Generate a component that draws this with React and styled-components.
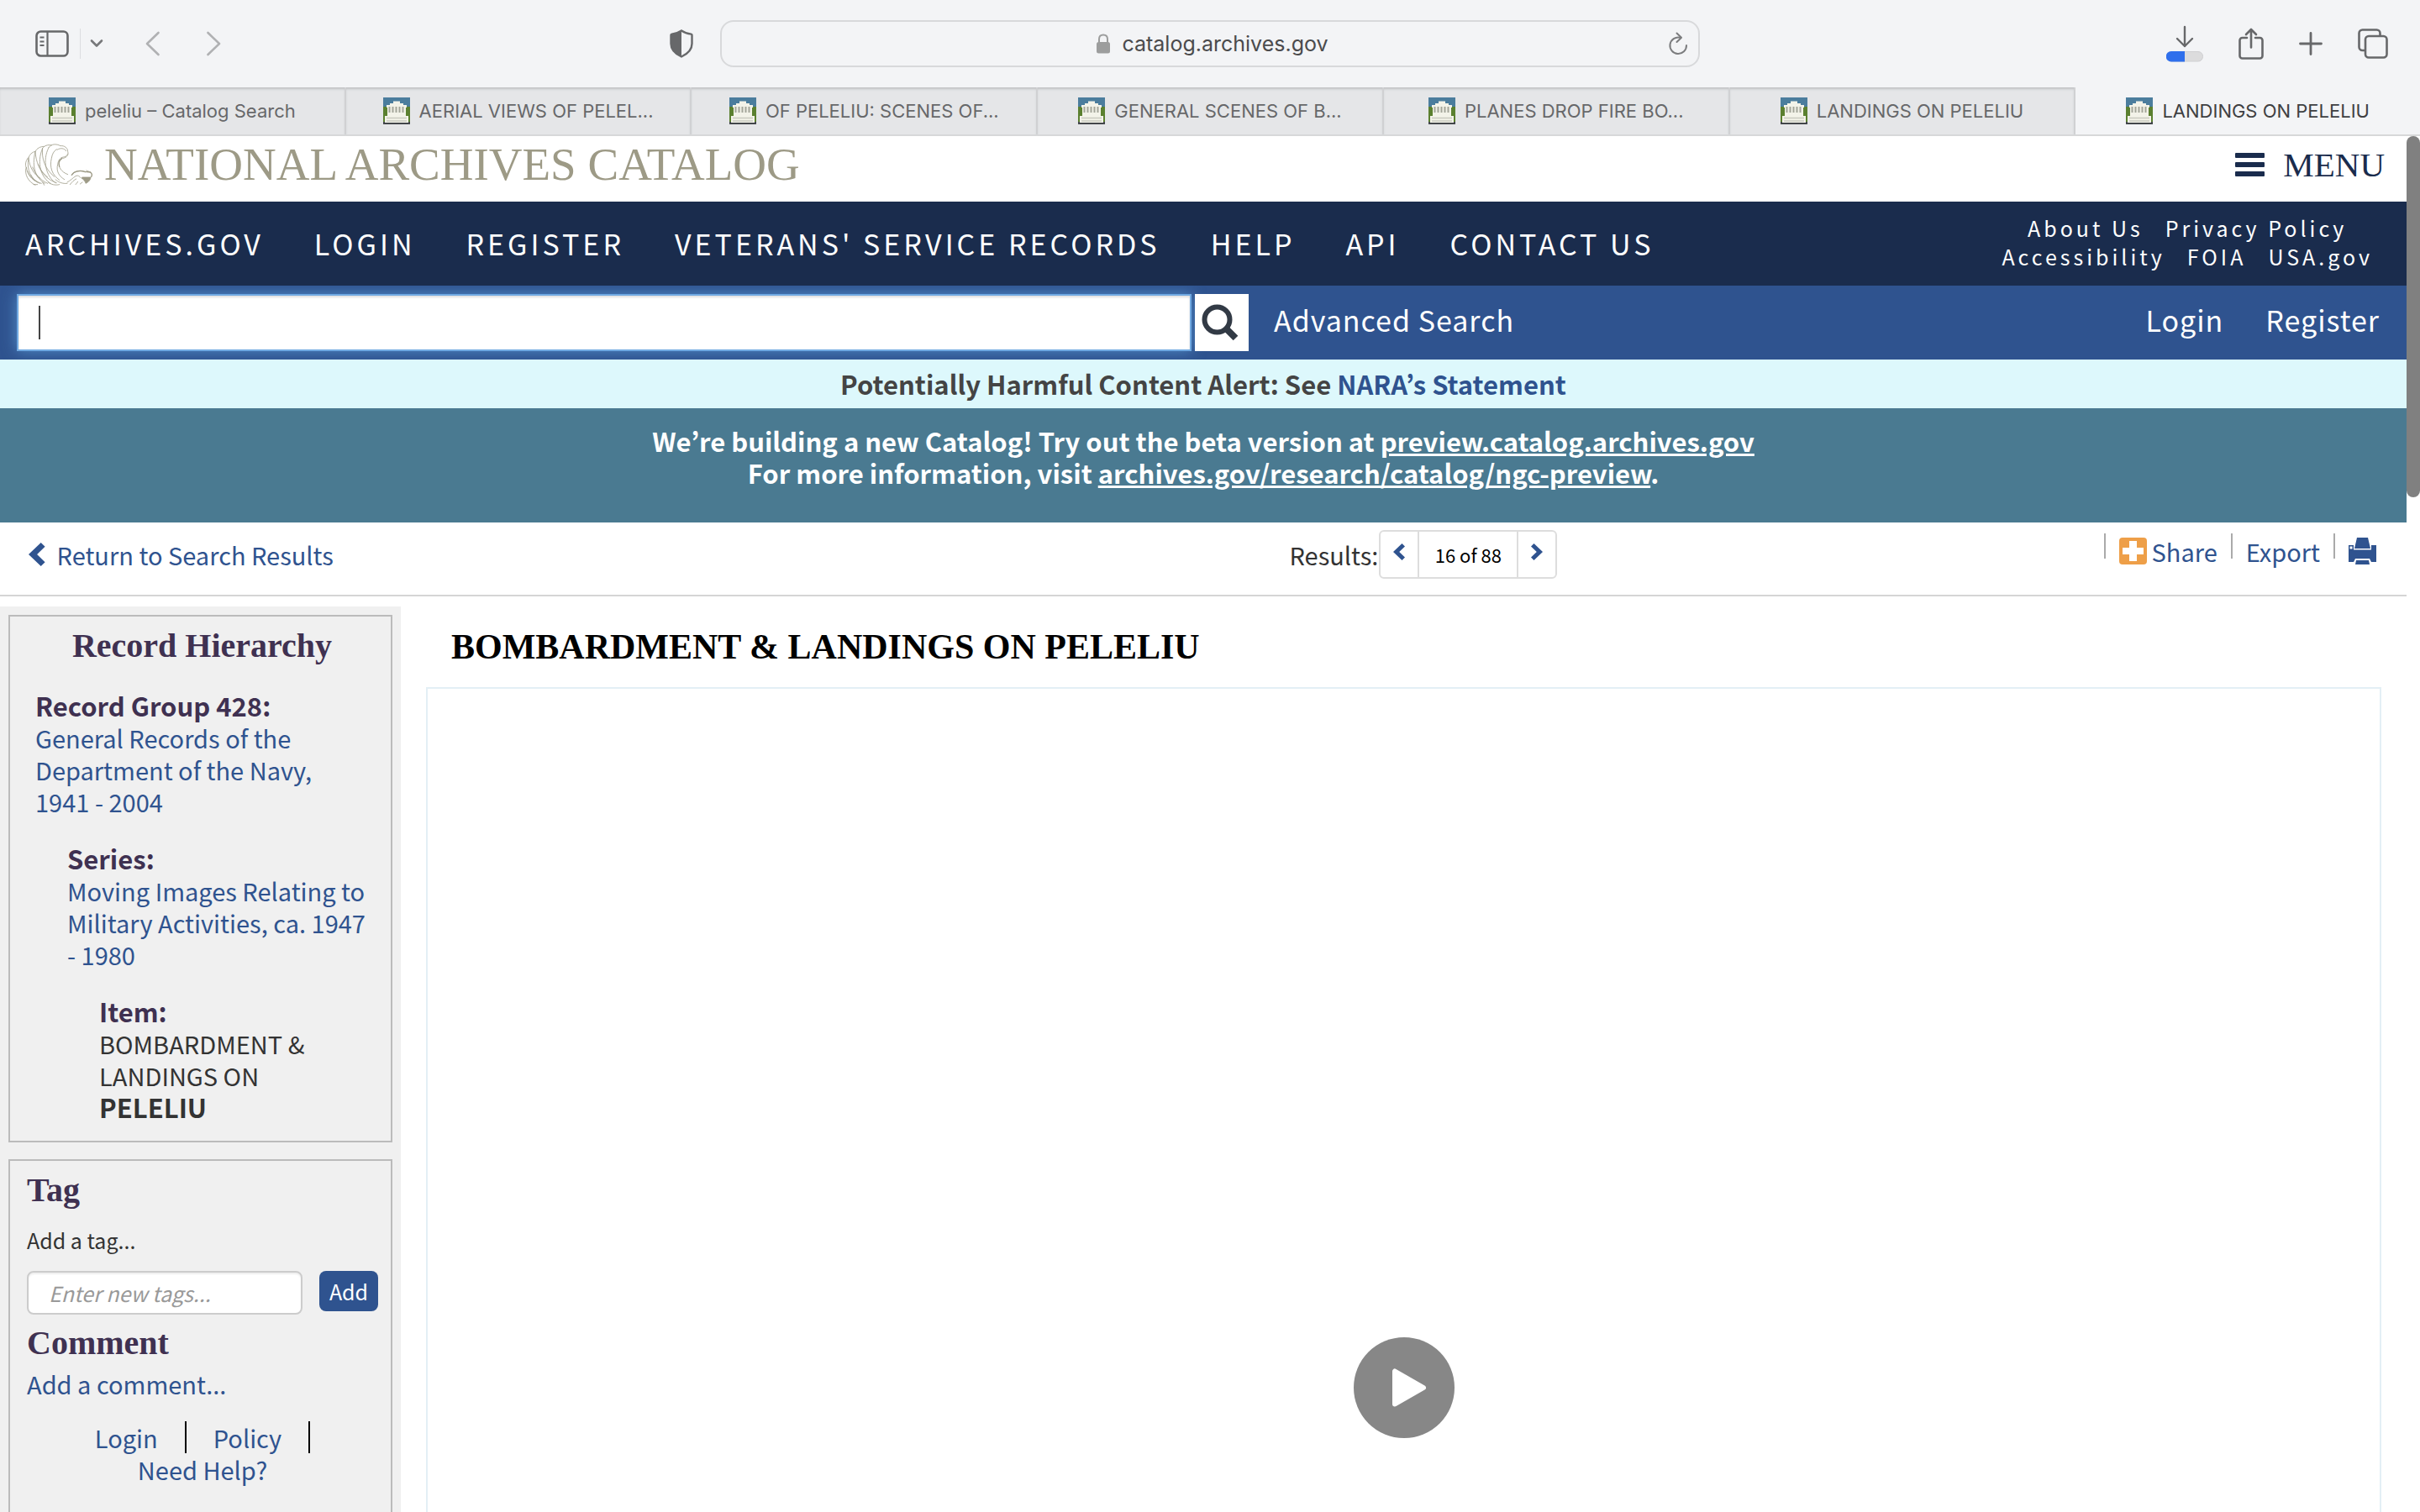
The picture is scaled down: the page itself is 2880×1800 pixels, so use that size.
import React from 'react';
import styled, { createGlobalStyle } from 'styled-components';

const tabs = [
  { title: 'peleliu – Catalog Search' },
  { title: 'AERIAL VIEWS OF PELEL...' },
  { title: 'OF PELELIU: SCENES OF...' },
  { title: 'GENERAL SCENES OF B...' },
  { title: 'PLANES DROP FIRE BO...' },
  { title: 'LANDINGS ON PELELIU' },
  { title: 'LANDINGS ON PELELIU', active: true },
];

const navLinks = [
  'ARCHIVES.GOV',
  'LOGIN',
  'REGISTER',
  "VETERANS' SERVICE RECORDS",
  'HELP',
  'API',
  'CONTACT US',
];

const siteLinks = [
  ['About Us', 'Privacy Policy'],
  ['Accessibility', 'FOIA', 'USA.gov'],
];

const SidebarIcon = () => (
  <svg width="40" height="32" viewBox="0 0 40 32" fill="none" stroke="#67686a">
    <rect x="1.5" y="1.5" width="37" height="29" rx="5" strokeWidth="2.6" />
    <path d="M14.5 2v28" strokeWidth="2.2" />
    <path d="M5.5 8.5h5M5.5 13.5h5M5.5 18h5" strokeWidth="2" />
  </svg>
);

const ChevronDown = () => (
  <svg width="16" height="12" viewBox="0 0 16 12" fill="none" stroke="#77787a" strokeWidth="2.6" strokeLinecap="round" strokeLinejoin="round">
    <path d="M2 2.5l6 6 6-6" />
  </svg>
);

const BackIcon = () => (
  <svg width="18" height="30" viewBox="0 0 18 30" fill="none" stroke="#b0b1b3" strokeWidth="2.6" strokeLinecap="round" strokeLinejoin="round">
    <path d="M15.500 2L2 15l13.500 13" />
  </svg>
);

const ForwardIcon = () => (
  <svg width="18" height="30" viewBox="0 0 18 30" fill="none" stroke="#b0b1b3" strokeWidth="2.6" strokeLinecap="round" strokeLinejoin="round">
    <path d="M2.500 2L16 15 2.500 28" />
  </svg>
);

const ShieldIcon = () => (
  <svg width="28" height="34" viewBox="0 0 28 34">
    <path d="M14 1.500C10.500 4 6 5.200 2.500 5.600 1.800 5.700 1.500 6 1.500 6.800V17c0 7.500 6 12.500 12.500 15.500C20.500 29.500 26.500 24.500 26.500 17V6.800c0-.8-.3-1.100-1-1.200C22 5.200 17.500 4 14 1.500z" fill="none" stroke="#67686a" strokeWidth="2.4" />
    <path d="M14 1.500C10.500 4 6 5.200 1.500 5.800V17c0 7.500 6 12.500 12.500 15.500z" fill="#67686a" />
  </svg>
);

const LockIcon = () => (
  <svg width="16" height="24" viewBox="0 0 16 24">
    <rect x="0" y="10" width="16" height="13.500" rx="2.500" fill="#9c9d9d" />
    <path d="M3 11V6.500C3 3.500 5 1.500 8 1.500s5 2 5 5V11" fill="none" stroke="#9c9d9d" strokeWidth="2" />
  </svg>
);

const ReloadIcon = () => (
  <svg width="24" height="28" viewBox="0 0 24 28" fill="none" stroke="#7b7c7e" strokeWidth="2" strokeLinecap="round" strokeLinejoin="round">
    <path d="M14.500 6.700A9.800 9.800 0 1 0 22 16" />
    <path d="M10.500 1.500l5.500 5.200-5.500 5.300" />
  </svg>
);

const DownloadIcon = () => (
  <svg width="44" height="44" viewBox="0 0 44 44" fill="none">
    <path d="M22 2v23M13 16l9 9 9-9" stroke="#67686a" strokeWidth="2.400" strokeLinecap="round" strokeLinejoin="round" />
    <rect x="0.500" y="31.500" width="43" height="11.500" rx="5.500" fill="#dcdcdd" stroke="#cfcfd1" />
    <path d="M22 31v12.500H6a6 6 0 0 1 0-12.500z" fill="#2f6fec" />
  </svg>
);

const ShareIcon = () => (
  <svg width="30" height="38" viewBox="0 0 30 38" fill="none" stroke="#67686a" strokeWidth="2.600" strokeLinecap="round" strokeLinejoin="round">
    <path d="M10 12H4.500a3 3 0 0 0-3 3v18.500a3 3 0 0 0 3 3h21a3 3 0 0 0 3-3V15a3 3 0 0 0-3-3H20" />
    <path d="M15 23.500V2M9 8l6-6 6 6" />
  </svg>
);

const PlusIcon = () => (
  <svg width="28" height="28" viewBox="0 0 28 28" stroke="#67686a" strokeWidth="2.800" strokeLinecap="round">
    <path d="M14 1.500v25M1.500 14h25" />
  </svg>
);

const TabsIcon = () => (
  <svg width="36" height="36" viewBox="0 0 36 36" fill="none" stroke="#67686a" strokeWidth="2.600">
    <path d="M9 26H5.500a4 4 0 0 1-4-4V5.500a4 4 0 0 1 4-4h17a4 4 0 0 1 4 4V9" />
    <rect x="9" y="9" width="25.500" height="25.500" rx="4" />
  </svg>
);

const Favicon = () => (
  <svg width="32" height="32" viewBox="0 0 32 32">
    <rect width="32" height="32" fill="#4b7d9d" />
    <rect y="11" width="32" height="21" fill="#5b8030" />
    <rect y="29" width="32" height="3" fill="#42464a" />
    <path d="M4 9h4V7h4V4.500h8V7h4v2h4v3H4z" fill="#f3f3e9" />
    <rect x="5" y="10" width="22" height="13" fill="#f3f3e9" />
    <path d="M7.500 11v7M11.500 11v7M15.500 11v7M19.500 11v7M23.500 11v7" stroke="#a4a69a" strokeWidth="2" />
    <rect x="2" y="22" width="28" height="8" fill="#f3f3e9" />
    <path d="M4 24.500h24M4 28h24" stroke="#c9cac0" strokeWidth="1.400" />
  </svg>
);

const EagleLogo = () => (
  <svg width="80" height="50" viewBox="0 0 240 150" fill="none" stroke="#9d9a86" strokeWidth="2.400" strokeLinecap="round">
    <path d="M36 148C10 136-4 108 4 84c3 22 14 38 30 48" />
    <path d="M3 84c-4-10-1-24 8-34" />
    <path d="M52 142C20 128 4 92 12 52c4 32 18 58 42 72" />
    <path d="M12 52c2-12 12-22 24-24" />
    <path d="M70 142C38 124 22 84 36 28c2 38 16 70 44 92" />
    <path d="M36 28c6-12 18-18 32-18" />
    <path d="M90 142C56 120 40 70 62 16c-4 38 8 74 42 102" />
    <path d="M62 16c6-8 18-14 32-10" />
    <path d="M108 140C74 116 60 60 84 14" />
    <path d="M84 14C92 0 112 0 126 8c14-2 26 8 26 20 4 12-4 22-16 24" />
    <path d="M122 130c-26-18-36-46-28-78 2-14 8-26 18-32" />
    <path d="M114 22c12-8 26-6 32 4" />
    <path d="M140 128c-20-12-30-30-24-54 2-14 8-24 20-26 6 0 12-4 16-10" />
    <path d="M132 52c-10 6-14 18-10 30" strokeWidth="4" />
    <path d="M122 82c4 12 14 22 30 28" />
    <path d="M20 112c8 16 22 26 38 30M8 98c8 20 20 32 36 40" />
    <path d="M26 84c10 26 28 46 54 58M46 74c12 32 34 56 66 66" />
    <path d="M30 146h14M62 138l6 10M82 138c10 8 26 12 40 8M108 128c10 10 26 16 42 14" />
    <path d="M166 112c8-14 28-18 48-12l18 2c6 4 8 10 4 16" strokeWidth="4" />
    <path d="M170 106c12-10 34-10 44-4M150 138c12-6 20-16 30-22 8-4 14 0 18 6M160 146c8-10 14-16 22-20M180 146l8-10M196 144l8-6M218 96l16 6" />
    <path d="M204 120h30c0 8-8 18-18 22-2-8-8-14-14-18z" fill="#9d9a86" />
  </svg>
);

const SearchIcon = () => (
  <svg width="44" height="44" viewBox="0 0 44 44" fill="none" stroke="#323a45">
    <circle cx="18.500" cy="18.500" r="15" strokeWidth="6" />
    <path d="M29 29l11.500 11.500" strokeWidth="8" />
  </svg>
);

const AngleIcon = ({ flip, size = 20 }) => (
  <svg width={size * 0.7} height={size} viewBox="0 0 14 20" fill="#2f538f">
    <path d={flip ? 'M3.500 0L14 10 3.500 20 0 16.600 6.800 10 0 3.400z' : 'M10.500 0L0 10l10.500 10 3.500-3.400L7.200 10 14 3.400z'} />
  </svg>
);

const AddThisIcon = () => (
  <svg width="33" height="32" viewBox="0 0 33 32">
    <rect width="33" height="32" rx="4" fill="#ee9f48" />
    <path d="M12 4h9v8h8v8h-8v8h-9v-8H4v-8h8z" fill="#fff" />
  </svg>
);

const PrinterIcon = () => (
  <svg width="33" height="32" viewBox="0 0 33 32" fill="#2f538f">
    <path d="M10 0h13l3 13H7z" />
    <path d="M0 9h6v5.500h21V9h6v20h-6l-2-4H8l-2 4H0z" />
    <path d="M9 27h15l1 5H8z" />
    <rect x="1.500" y="10.500" width="3" height="3" fill="#fff" />
  </svg>
);

const PlayIcon = () => (
  <svg width="120" height="120" viewBox="0 0 120 120">
    <circle cx="60" cy="60" r="60" fill="#878787" />
    <path d="M49 40.500v39L83 60z" fill="#fff" stroke="#fff" strokeWidth="6" strokeLinejoin="round" />
  </svg>
);

const App = () => {
  return (
    <Window>
      <GlobalStyle />
      <Toolbar>
        <ToolbarLeft>
          <SidebarToggle>
            <IconButton aria-label="Show sidebar">
              <SidebarIcon />
            </IconButton>
            <IconButton aria-label="Tab groups" $divided>
              <ChevronDown />
            </IconButton>
          </SidebarToggle>
          <HistoryButtons>
            <IconButton aria-label="Back">
              <BackIcon />
            </IconButton>
            <IconButton aria-label="Forward">
              <ForwardIcon />
            </IconButton>
          </HistoryButtons>
          <ShieldButton aria-label="Privacy report">
            <ShieldIcon />
          </ShieldButton>
        </ToolbarLeft>
        <AddressBar>
          <Address>
            <LockIcon />
            catalog.archives.gov
          </Address>
          <IconButton aria-label="Reload">
            <ReloadIcon />
          </IconButton>
        </AddressBar>
        <ToolbarRight>
          <IconButton aria-label="Downloads">
            <DownloadIcon />
          </IconButton>
          <IconButton aria-label="Share">
            <ShareIcon />
          </IconButton>
          <IconButton aria-label="New tab">
            <PlusIcon />
          </IconButton>
          <IconButton aria-label="Tab overview">
            <TabsIcon />
          </IconButton>
        </ToolbarRight>
      </Toolbar>
      <TabBar>
        {tabs.map((tab, index) => (
          <Tab key={index} $active={tab.active}>
            <Favicon />
            {tab.title}
          </Tab>
        ))}
      </TabBar>

      <Viewport>
        <Page>
          <Header>
            <Logo href="#">
              <EagleLogo />
              NATIONAL ARCHIVES CATALOG
            </Logo>
            <MenuButton>
              <MenuBars>
                <span />
                <span />
                <span />
              </MenuBars>
              MENU
            </MenuButton>
          </Header>

          <NavBar>
            <NavList>
              {navLinks.map((link) => (
                <NavLink key={link} href="#">
                  {link}
                </NavLink>
              ))}
            </NavList>
            <SiteLinks>
              {siteLinks.map((row) => (
                <SiteRow key={row[0]}>
                  {row.map((link) => (
                    <SiteLink key={link} href="#">
                      {link}
                    </SiteLink>
                  ))}
                </SiteRow>
              ))}
            </SiteLinks>
          </NavBar>

          <SearchBar>
            <SearchField>
              <Caret />
              <SearchInput type="text" aria-label="Search the catalog" />
            </SearchField>
            <SearchButton aria-label="Search">
              <SearchIcon />
            </SearchButton>
            <SearchLink href="#">Advanced Search</SearchLink>
            <AccountLinks>
              <SearchLink href="#">Login</SearchLink>
              <SearchLink href="#">Register</SearchLink>
            </AccountLinks>
          </SearchBar>

          <Alert>
            Potentially Harmful Content Alert: See <AlertLink href="#">NARA’s Statement</AlertLink>
          </Alert>
          <Banner>
            <div>
              We’re building a new Catalog! Try out the beta version at{' '}
              <BannerLink href="#">preview.catalog.archives.gov</BannerLink>
            </div>
            <div>
              For more information, visit{' '}
              <BannerLink href="#">archives.gov/research/catalog/ngc-preview</BannerLink>.
            </div>
          </Banner>

          <ResultBar>
            <ReturnLink href="#">
              <AngleIcon size={28} />
              Return to Search Results
            </ReturnLink>
            <Pager>
              Results:
              <PagerGroup>
                <PagerButton aria-label="Previous result">
                  <AngleIcon />
                </PagerButton>
                <PagerCount>16 of 88</PagerCount>
                <PagerButton aria-label="Next result">
                  <AngleIcon flip />
                </PagerButton>
              </PagerGroup>
            </Pager>
            <Actions>
              <Action href="#">
                <AddThisIcon />
                Share
              </Action>
              <Action href="#">Export</Action>
              <Action href="#" aria-label="Print">
                <PrinterIcon />
              </Action>
            </Actions>
          </ResultBar>

          <Content>
            <Sidebar>
              <HierarchyBox>
                <SideHeading $center>Record Hierarchy</SideHeading>
                <Level $depth={0}>
                  <LevelName>Record Group 428:</LevelName>
                  <TextLink href="#">General Records of the Department of the Navy, 1941 - 2004</TextLink>
                </Level>
                <Level $depth={1}>
                  <LevelName>Series:</LevelName>
                  <TextLink href="#">Moving Images Relating to Military Activities, ca. 1947 - 1980</TextLink>
                </Level>
                <Level $depth={2}>
                  <LevelName>Item:</LevelName>
                  BOMBARDMENT &amp; LANDINGS ON <Match>PELELIU</Match>
                </Level>
              </HierarchyBox>
              <TagBox>
                <SideHeading>Tag</SideHeading>
                <TagLabel htmlFor="new-tag">Add a tag...</TagLabel>
                <TagForm>
                  <TagInput id="new-tag" type="text" placeholder="Enter new tags..." />
                  <AddButton>Add</AddButton>
                </TagForm>
                <SideHeading>Comment</SideHeading>
                <CommentLink href="#">Add a comment...</CommentLink>
                <HelpLinks>
                  <HelpRow>
                    <HelpItem>
                      <TextLink href="#">Login</TextLink>
                    </HelpItem>
                    <HelpItem>
                      <TextLink href="#">Policy</TextLink>
                    </HelpItem>
                  </HelpRow>
                  <TextLink href="#">Need Help?</TextLink>
                </HelpLinks>
              </TagBox>
            </Sidebar>
            <Main>
              <Title>BOMBARDMENT &amp; LANDINGS ON PELELIU</Title>
              <Video>
                <PlayButton aria-label="Play video">
                  <PlayIcon />
                </PlayButton>
              </Video>
            </Main>
          </Content>
        </Page>
        <ScrollTrack>
          <ScrollThumb />
        </ScrollTrack>
      </Viewport>
    </Window>
  );
};

const GlobalStyle = createGlobalStyle`
  * {
    box-sizing: border-box;
  }

  body {
    margin: 0;
    background: #fff;
    overflow: hidden;
  }

  a {
    text-decoration: none;
  }

  button {
    cursor: pointer;
  }

  svg {
    display: block;
    flex: none;
  }
`;

// The KR cut keeps the curly apostrophe proportional
const Window = styled.div`
  display: flex;
  flex-direction: column;
  height: 100vh;
  font-family: 'Noto Sans CJK KR', 'Noto Sans', sans-serif;
  font-size: 29px;
  line-height: 38px;
  color: #333;
`;

const Toolbar = styled.div`
  display: grid;
  grid-template-columns: 1fr 1166px 1fr;
  align-items: center;
  flex: none;
  height: 104px;
  background: #f3f4f6;
  font-family: Inter, sans-serif;
`;

const ToolbarLeft = styled.div`
  display: flex;
  align-items: center;
  padding: 0 32px 0 42px;
`;

const ToolbarRight = styled.div`
  display: flex;
  align-items: center;
  justify-content: flex-end;
  gap: 42px;
  padding-right: 38px;
`;

const IconButton = styled.button`
  display: flex;
  align-items: center;
  justify-content: center;
  padding: 0;
  border: 0;
  background: none;

  ${({ $divided }) =>
    $divided &&
    `
    height: 36px;
    padding-left: 11px;
    border-left: 1px solid #dcdde0;
  `}
`;

const ShieldButton = styled(IconButton)`
  margin-left: auto;
`;

const SidebarToggle = styled.div`
  display: flex;
  align-items: center;
  gap: 13px;
`;

const HistoryButtons = styled.div`
  display: flex;
  gap: 54px;
  margin-left: 50px;
`;

const AddressBar = styled.div`
  display: flex;
  align-items: center;
  height: 56px;
  padding: 0 12px 0 42px;
  border: 2px solid #d8d9db;
  border-radius: 16px;
`;

const Address = styled.div`
  display: flex;
  flex: 1;
  align-items: center;
  justify-content: center;
  gap: 14px;
  font-size: 25px;
  color: #4b4b4d;
`;

const TabBar = styled.div`
  display: flex;
  flex: none;
  height: 58px;
  background: #f3f4f6;
  border-bottom: 2px solid #d7d8d9;
  font-family: Inter, sans-serif;
`;

const Tab = styled.button`
  display: flex;
  flex: 1 1 0;
  align-items: center;
  justify-content: center;
  gap: 11px;
  padding: 0;
  border: 0;
  border-right: ${({ $active }) => ($active ? '0' : '2px solid #d0d1d3')};
  background: ${({ $active }) => ($active ? '#f3f4f6' : '#e5e6e8')};
  box-shadow: ${({ $active }) => ($active ? 'none' : 'inset 0 3px 3px -1px #bfc0c2')};
  color: ${({ $active }) => ($active ? '#3f4042' : '#67686a')};
  font-family: inherit;
  font-size: 22px;
  white-space: nowrap;
`;

const Viewport = styled.div`
  display: flex;
  flex: 1;
  min-height: 0;
  overflow: hidden;
`;

const Page = styled.div`
  flex: 1;
  min-width: 0;
`;

const ScrollTrack = styled.div`
  flex: none;
  width: 16px;
`;

const ScrollThumb = styled.div`
  height: 430px;
  border-radius: 8px;
  background: #808080;
`;

const Header = styled.header`
  display: flex;
  align-items: center;
  justify-content: space-between;
  height: 78px;
  padding: 0 26px 10px 30px;
  background: #fff;
`;

const Logo = styled.a`
  display: flex;
  align-items: center;
  gap: 14px;
  font-family: 'Liberation Serif', serif;
  font-size: 55px;
  line-height: 60px;
  color: #9d9a86;
`;

const MenuButton = styled.button`
  display: flex;
  align-items: center;
  gap: 22px;
  padding: 0;
  border: 0;
  background: none;
  font-family: 'Liberation Serif', serif;
  font-size: 41px;
  color: #1a2c4d;
`;

const MenuBars = styled.div`
  display: flex;
  flex-direction: column;
  gap: 5px;

  span {
    width: 35px;
    height: 6px;
    border-radius: 1px;
    background: #1a2c4d;
  }
`;

const NavBar = styled.nav`
  display: flex;
  align-items: center;
  justify-content: space-between;
  height: 100px;
  padding: 0 40px 0 30px;
  background: #1a2c4d;
`;

const NavList = styled.div`
  display: flex;
  gap: 60px;
`;

const NavLink = styled.a`
  font-size: 34px;
  letter-spacing: 4px;
  color: #fff;
`;

const SiteLinks = styled.div`
  display: flex;
  flex-direction: column;
  align-items: center;
  padding-bottom: 4px;
`;

const SiteRow = styled.div`
  display: flex;
  gap: 26px;
`;

const SiteLink = styled.a`
  font-size: 25px;
  line-height: 34px;
  letter-spacing: 4px;
  color: #fff;
`;

const SearchBar = styled.div`
  display: flex;
  align-items: center;
  height: 88px;
  padding: 0 32px 0 20px;
  background: #2f538f;
  overflow: hidden;
`;

const SearchField = styled.div`
  display: flex;
  align-items: center;
  flex: 0 1 1398px;
  height: 68px;
  padding-left: 24px;
  border: 2px solid #70a9e2;
  background: #fff;
  box-shadow: 0 0 16px rgba(102, 175, 233, 0.6), inset 0 2px 3px #dddddd;
`;

const Caret = styled.span`
  width: 2px;
  height: 40px;
  background: #444;
`;

const SearchInput = styled.input`
  flex: 1;
  height: 40px;
  border: 0;
  outline: 0;
  background: none;
  font-family: inherit;
  font-size: 29px;
`;

const SearchButton = styled.button`
  display: flex;
  align-items: center;
  justify-content: center;
  z-index: 1;
  width: 64px;
  height: 68px;
  margin: 0 30px 0 4px;
  padding: 0 4px 0 0;
  border: 0;
  background: #fff;
`;

const SearchLink = styled.a`
  padding-bottom: 6px;
  font-size: 34px;
  letter-spacing: 1px;
  color: #fff;
`;

const AccountLinks = styled.div`
  display: flex;
  gap: 50px;
  margin-left: auto;
`;

const Alert = styled.div`
  padding: 10px 0;
  background: #ddf8fc;
  font-size: 31px;
  font-weight: 700;
  text-align: center;
  color: #444;
`;

const AlertLink = styled.a`
  color: #2f538f;
`;

const Banner = styled.div`
  padding: 20px 0 40px;
  background: #4a7a91;
  font-size: 31px;
  font-weight: 700;
  text-align: center;
  color: #fff;
`;

const BannerLink = styled.a`
  color: #fff;
  text-decoration: underline;
`;

const ResultBar = styled.div`
  display: grid;
  grid-template-columns: 1fr 317px 1fr;
  align-items: center;
  height: 88px;
  padding: 0 36px 10px 34px;
  border-bottom: 2px solid #d5d5d5;
`;

const ReturnLink = styled.a`
  display: flex;
  align-items: center;
  gap: 14px;
  color: #2f538f;
`;

const Pager = styled.div`
  display: flex;
  align-items: center;
  gap: 1px;
  margin-left: 262px;
  white-space: nowrap;
`;

const PagerGroup = styled.div`
  display: flex;
  flex: none;
  width: 212px;
  height: 58px;
  border: 2px solid #ddd;
  border-radius: 6px;
`;

const PagerButton = styled.button`
  display: flex;
  align-items: center;
  justify-content: center;
  width: 44px;
  padding: 0 0 6px;
  border: 0;
  background: none;
`;

const PagerCount = styled.span`
  display: flex;
  flex: 1;
  align-items: center;
  justify-content: center;
  border: solid #ddd;
  border-width: 0 2px;
  font-size: 22px;
  color: #000;
`;

const Actions = styled.div`
  display: flex;
  justify-content: flex-end;
  padding-bottom: 20px;
`;

const Action = styled.a`
  display: flex;
  align-items: center;
  gap: 6px;
  height: 30px;
  margin-left: 16px;
  padding: 12px 0 0 16px;
  border-left: 2px solid #aaa;
  color: #2f538f;
`;

const Content = styled.div`
  display: flex;
  align-items: flex-start;
  padding-top: 12px;
`;

const Sidebar = styled.aside`
  display: flex;
  flex-direction: column;
  flex: none;
  gap: 20px;
  width: 477px;
  padding: 10px;
  background: #f0f0f0;
`;

const SideBox = styled.section`
  border: 2px solid #bbb;
`;

const HierarchyBox = styled(SideBox)`
  display: flex;
  flex-direction: column;
  gap: 30px;
  padding: 13px 26px 21px 30px;
`;

const SideHeading = styled.h2`
  margin: 0;
  font-family: 'Liberation Serif', serif;
  font-size: 40px;
  line-height: 44px;
  text-align: ${({ $center }) => ($center ? 'center' : 'left')};
  color: #3f3151;
`;

const Level = styled.div`
  padding-left: ${({ $depth }) => $depth * 38}px;
`;

const LevelName = styled.div`
  font-size: 31px;
  font-weight: 700;
  color: #3f3151;
`;

const Match = styled.b`
  display: block;
  font-size: 31px;
`;

const TextLink = styled.a`
  color: #2f538f;
`;

const TagBox = styled(SideBox)`
  height: 520px;
  padding: 13px 15px 12px 20px;
`;

const TagLabel = styled.label`
  display: block;
  margin: 18px 0;
  font-size: 25px;
`;

const TagForm = styled.div`
  display: flex;
  align-items: flex-start;
  gap: 20px;
  margin-bottom: 12px;
`;

const TagInput = styled.input`
  flex: 1;
  min-width: 0;
  height: 52px;
  padding: 0 24px;
  border: 2px solid #ccc;
  border-radius: 8px;
  background: #fff;
  box-shadow: inset 0 2px 2px #eee;
  font-family: inherit;
  font-size: 25px;
  font-style: italic;

  &::placeholder {
    color: #999;
  }
`;

const AddButton = styled.button`
  width: 70px;
  height: 48px;
  padding: 0;
  border: 0;
  border-radius: 8px;
  background: #2f538f;
  font-family: inherit;
  font-size: 25px;
  color: #fff;
`;

const CommentLink = styled(TextLink)`
  display: block;
  margin-top: 7px;
`;

const HelpLinks = styled.div`
  margin-top: 26px;
  text-align: center;
`;

const HelpRow = styled.div`
  display: flex;
  justify-content: center;
`;

const HelpItem = styled.span`
  padding-right: 32px;
  border-right: 2px solid #000;

  & + & {
    padding-left: 32px;
  }
`;

const Main = styled.main`
  flex: 1;
  min-width: 0;
  padding: 22px 30px 0;
`;

const Title = styled.h1`
  margin: 0;
  padding: 0 30px 22px;
  font-family: 'Liberation Serif', serif;
  font-size: 42px;
  line-height: 52px;
  color: #000;
`;

const Video = styled.div`
  display: flex;
  align-items: center;
  justify-content: center;
  height: 1668px;
  border: 2px solid #e3eff5;
`;

const PlayButton = styled.button`
  padding: 0;
  border: 0;
  border-radius: 50%;
  background: none;
`;

export default App;
